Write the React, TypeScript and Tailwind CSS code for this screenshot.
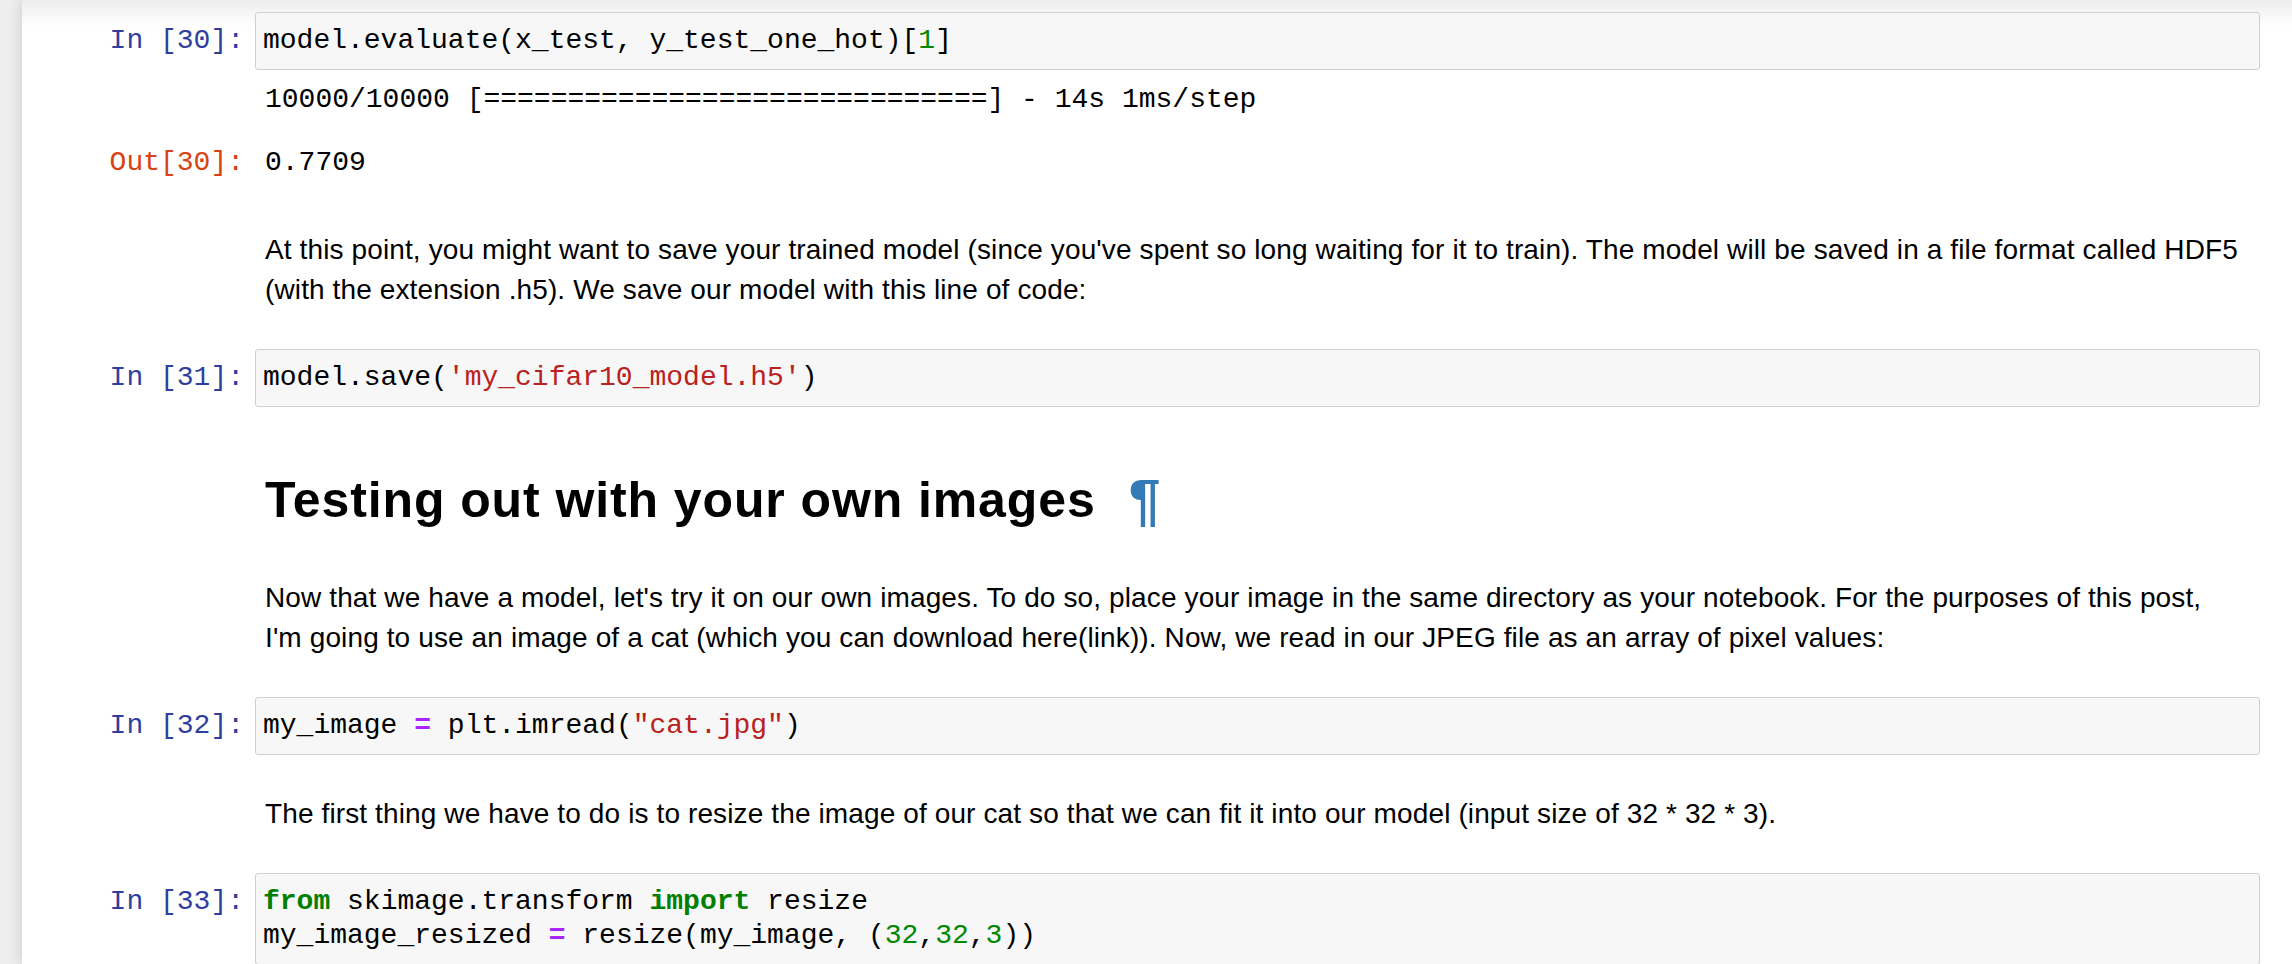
import React from 'react';

const mono = "font-['Liberation_Mono','Courier_New',monospace]";
const sans = "font-['Liberation_Sans',Arial,sans-serif]";

function Prompt({ kind, n }: { kind: 'in' | 'out'; n: number }) {
  return (
    <div
      className={`${mono} w-[233px] shrink-0 pr-[11px] text-right text-[28px] leading-[34px] ${
        kind === 'in' ? 'text-[#303F9F]' : 'text-[#D84315]'
      }`}
    >
      {kind === 'in' ? `In [${n}]:` : `Out[${n}]:`}
    </div>
  );
}

function CodeCell({ n, className = '', children }: { n: number; className?: string; children: React.ReactNode }) {
  return (
    <div className={`flex items-start ${className}`}>
      <div className="pt-[12px]">
        <Prompt kind="in" n={n} />
      </div>
      <div
        className={`${mono} mr-[32px] flex-1 whitespace-pre rounded-[3px] border border-[#cfcfcf] bg-[#f7f7f7] px-[7px] py-[11px] text-[28px] leading-[34px] text-black`}
      >
        {children}
      </div>
    </div>
  );
}

function TextCell({ className = '', children }: { className?: string; children: React.ReactNode }) {
  return (
    <div className={`pl-[243px] pr-[32px] ${className}`}>
      <div className={`${sans} text-[28px] leading-[40px] tracking-[0.12px] text-black`}>{children}</div>
    </div>
  );
}

const Str = ({ children }: { children: React.ReactNode }) => <span className="text-[#BA2121]">{children}</span>;
const Num = ({ children }: { children: React.ReactNode }) => <span className="text-[#008800]">{children}</span>;
const Kw = ({ children }: { children: React.ReactNode }) => <span className="font-bold text-[#008000]">{children}</span>;
const Op = ({ children }: { children: React.ReactNode }) => <span className="font-bold text-[#AA22FF]">{children}</span>;

export default function App() {
  return (
    <div className="flex h-[964px] w-full overflow-hidden bg-[#eeeeee]">
      <div className="relative ml-[22px] flex-1 bg-white pt-[12px] shadow-[0_0_12px_1px_rgba(87,87,87,0.2)]">
        <div className="pointer-events-none absolute inset-x-0 top-0 h-[26px] bg-linear-to-b from-[#ececec] to-white/0" />

        {/* In [30] */}
        <CodeCell n={30} className="relative">
          model.evaluate(x_test, y_test_one_hot)[<Num>1</Num>]
        </CodeCell>

        {/* stdout */}
        <div className="mt-[13px] flex">
          <div className="w-[233px] shrink-0" />
          <div className={`${mono} pl-[10px] text-[28px] leading-[34px] text-black whitespace-pre`}>
            10000/10000 [==============================] - 14s 1ms/step
          </div>
        </div>

        {/* Out [30] */}
        <div className="mt-[29px] flex">
          <Prompt kind="out" n={30} />
          <div className={`${mono} pl-[10px] text-[28px] leading-[34px] text-black`}>0.7709</div>
        </div>

        <TextCell className="mt-[50px]">
          At this point, you might want to save your trained model (since you've spent so long waiting for it to train). The
          model will be saved in a file format called HDF5
          <br />
          (with the extension .h5). We save our model with this line of code:
        </TextCell>

        <CodeCell n={31} className="mt-[39px]">
          model.save(<Str>'my_cifar10_model.h5'</Str>)
        </CodeCell>

        <div className="mt-[63px] pl-[243px]">
          <h2 className={`${sans} flex h-[60px] items-center text-[50px] font-bold leading-[60px] tracking-[0.9px] text-black`}>
            Testing out with your own images
            <span className="ml-[33px] text-[57px] leading-none text-[#337ab7]">¶</span>
          </h2>
        </div>

        <TextCell className="mt-[48px]">
          Now that we have a model, let's try it on our own images. To do so, place your image in the same directory as your
          notebook. For the purposes of this post,
          <br />
          I'm going to use an image of a cat (which you can download here(link)). Now, we read in our JPEG file as an array of
          pixel values:
        </TextCell>

        <CodeCell n={32} className="mt-[39px]">
          my_image <Op>=</Op> plt.imread(<Str>"cat.jpg"</Str>)
        </CodeCell>

        <TextCell className="mt-[39px]">
          The first thing we have to do is to resize the image of our cat so that we can fit it into our model (input size of
          32 * 32 * 3).
        </TextCell>

        <CodeCell n={33} className="mt-[39px]">
          <Kw>from</Kw> skimage.transform <Kw>import</Kw> resize{'\n'}my_image_resized <Op>=</Op> resize(my_image, (
          <Num>32</Num>,<Num>32</Num>,<Num>3</Num>)){'\n'}
        </CodeCell>
      </div>
    </div>
  );
}
